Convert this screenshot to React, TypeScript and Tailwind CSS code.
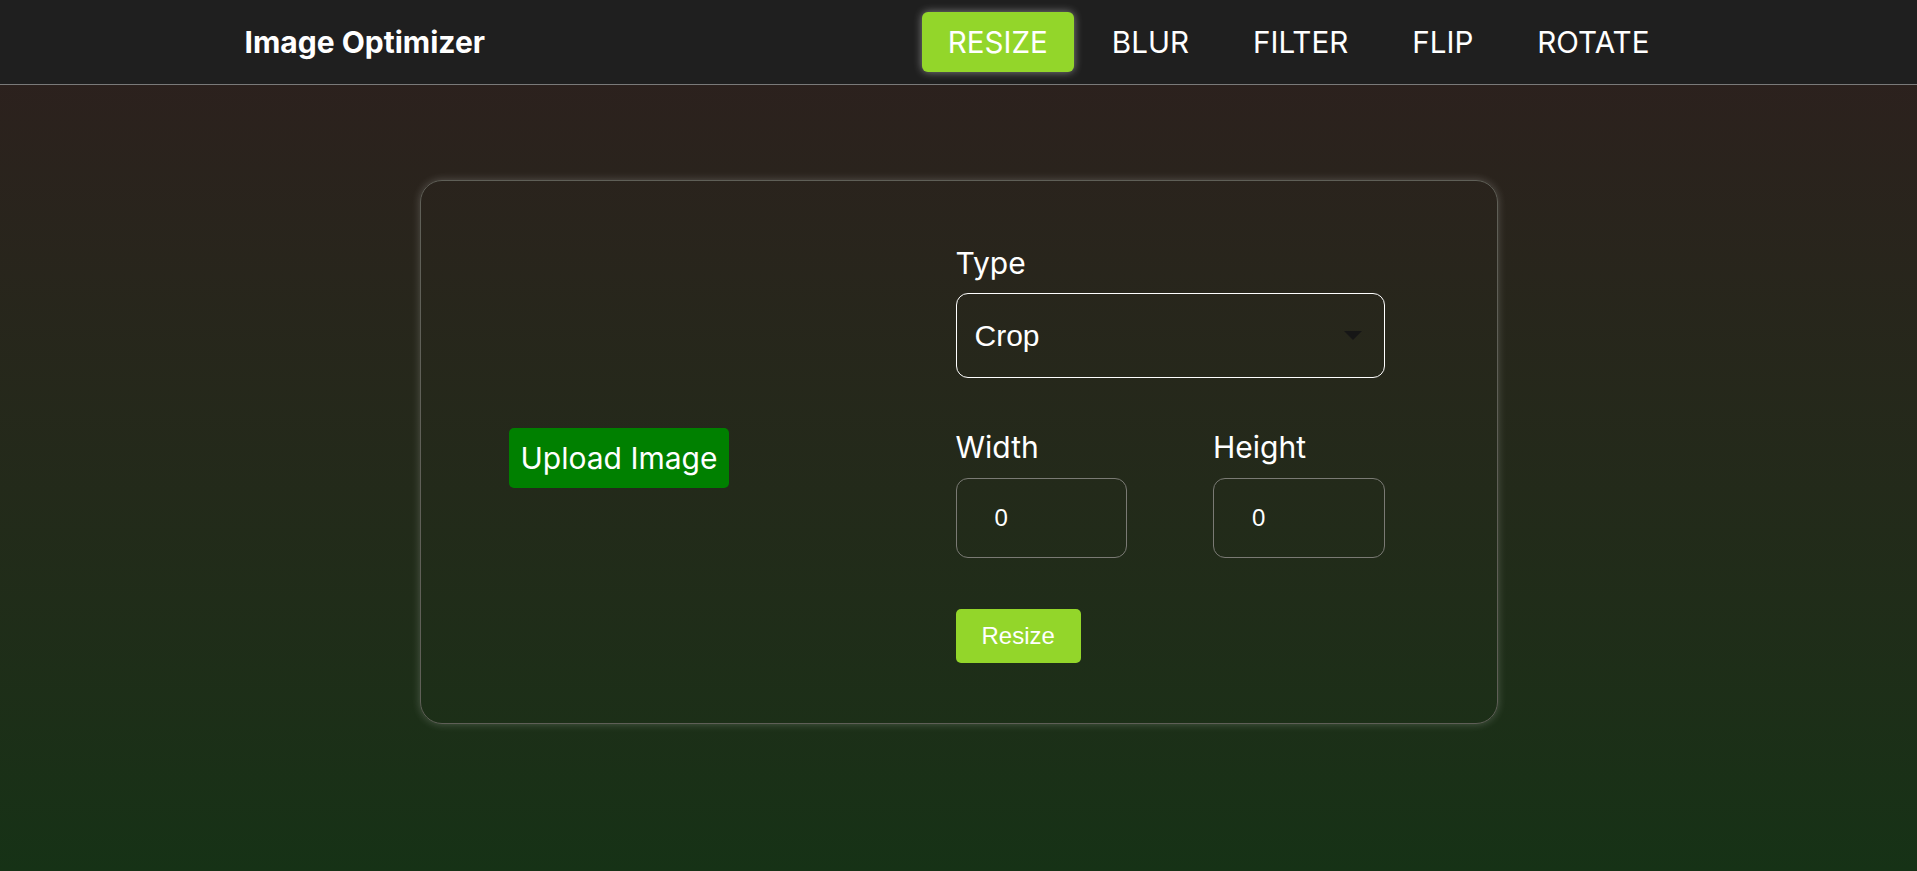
export default function App() {
  const tabs = ["RESIZE", "BLUR", "FILTER", "FLIP", "ROTATE"];

  return (
    <div className="min-h-screen bg-gradient-to-b from-[#2d1f1e] to-[#163216] font-['Inter',sans-serif] text-white">
      <header className="h-[85px] border-b border-[#7a7a7a] bg-[#1f1f1f]">
        <div className="mx-auto flex h-full w-[1434px] items-center justify-between pl-[3px]">
          <h1 className="text-[30px] font-bold leading-9">Image Optimizer</h1>

          <nav className="flex items-center gap-3">
            {tabs.map((tab) => (
              <button
                key={tab}
                className={
                  tab === "RESIZE"
                    ? "rounded-md bg-[#93d62a] px-[26px] py-3 text-[29.6px] leading-9 shadow-[0_0_8px_rgba(255,255,255,0.45)]"
                    : "rounded-md px-[26px] py-3 text-[29.6px] leading-9"
                }
              >
                {tab}
              </button>
            ))}
          </nav>
        </div>
      </header>

      <main className="pt-[95px]">
        <div className="mx-auto flex h-[544px] w-[1078px] items-center justify-between rounded-[22px] border border-[#5f5f57] pr-[112px] pl-[88px] shadow-[0_0_8px_rgba(255,255,255,0.22)]">
          <label className="mt-3 rounded-[5px] bg-[#008000] px-[12px] py-[12px] text-[30px] leading-9">
            Upload Image
          </label>

          <div className="flex w-[429px] flex-col pt-[3px]">
            <p className="mb-3 text-[30px] leading-9">Type</p>
            <div className="flex h-[85px] items-center justify-between rounded-xl border border-white pr-[22px] pl-[18px]">
              <span className="font-['Liberation_Sans',Arial,sans-serif] text-[30px]">
                Crop
              </span>
              <svg width="18" height="9" viewBox="0 0 18 9">
                <path d="M0 0H18L9 9Z" fill="#161616" />
              </svg>
            </div>

            <div className="mt-[51px] grid grid-cols-2 gap-x-[86px]">
              <div>
                <p className="mb-[13px] text-[30px] leading-9">Width</p>
                <div className="flex h-[80px] items-center rounded-xl border border-[#7a7a74] pl-[38px] font-['Liberation_Sans',Arial,sans-serif] text-[24px]">
                  0
                </div>
              </div>
              <div>
                <p className="mb-[13px] text-[30px] leading-9">Height</p>
                <div className="flex h-[80px] items-center rounded-xl border border-[#7a7a74] pl-[38px] font-['Liberation_Sans',Arial,sans-serif] text-[24px]">
                  0
                </div>
              </div>
            </div>

            <div className="mt-[51px]">
              <button className="h-[54px] rounded-[5px] bg-[#93d62a] px-[26px] font-['Liberation_Sans',Arial,sans-serif] text-[24px]">
                Resize
              </button>
            </div>
          </div>
        </div>
      </main>
    </div>
  );
}
